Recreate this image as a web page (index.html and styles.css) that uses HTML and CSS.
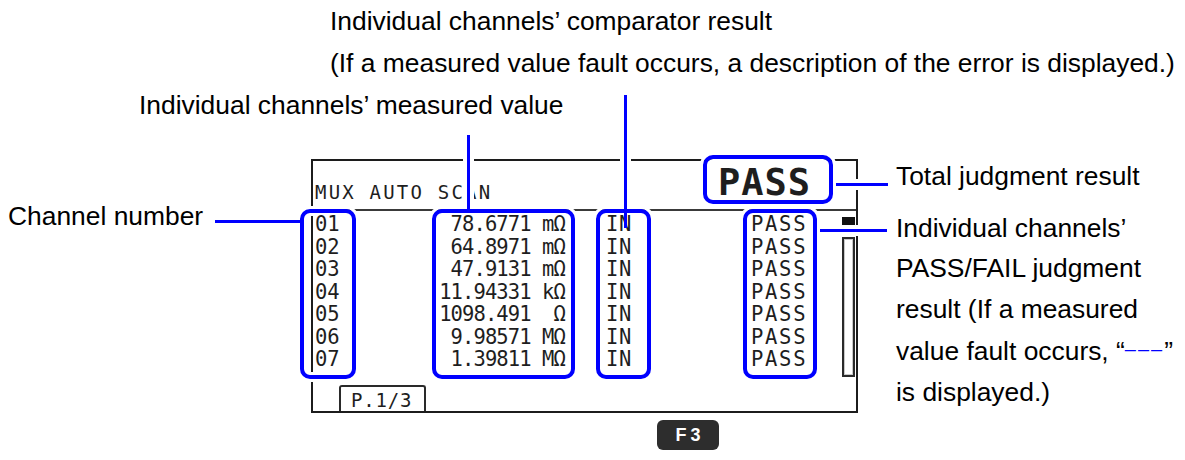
FILE: index.html
```html
<!DOCTYPE html>
<html lang="en">
<head>
    <meta charset="UTF-8">
    <title>Multiplexer Auto Scan Display</title>
    <link rel="stylesheet" href="styles.css">
</head>
<body>
    <div class="figure">
        <p class="note-top">Individual channels’ comparator result<br>(If a measured value fault occurs, a description of the error is displayed.)</p>
        <p class="note-value">Individual channels’ measured value</p>

        <div class="panel-row">
            <div class="note-channel">Channel number</div>

            <!-- Instrument screen -->
            <div class="screen">
                <div class="screen-head">
                    <span class="mode">MUX AUTO SCAN</span>
                    <span class="total mark">PASS</span>
                </div>
                <div class="screen-body">
                    <div class="col col-ch mark">
                        <div>01</div><div>02</div><div>03</div><div>04</div><div>05</div><div>06</div><div>07</div>
                    </div>
                    <div class="col col-val mark">
                        <div>78.6771 mΩ</div>
                        <div>64.8971 mΩ</div>
                        <div>47.9131 mΩ</div>
                        <div>11.94331 kΩ</div>
                        <div>1098.491  Ω</div>
                        <div>9.98571 MΩ</div>
                        <div>1.39811 MΩ</div>
                    </div>
                    <div class="col col-cmp mark">
                        <div>IN</div><div>IN</div><div>IN</div><div>IN</div><div>IN</div><div>IN</div><div>IN</div>
                    </div>
                    <div class="col col-judge mark">
                        <div>PASS</div><div>PASS</div><div>PASS</div><div>PASS</div><div>PASS</div><div>PASS</div><div>PASS</div>
                    </div>
                    <div class="scroll">
                        <span class="thumb"></span>
                        <span class="track"></span>
                    </div>
                </div>
                <div class="screen-foot">
                    <span class="tab">P.1/3</span>
                </div>
            </div>

            <div class="note-right">
                <p>Total judgment result</p>
                <p>Individual channels’<br>PASS/FAIL judgment<br>result (If a measured<br>value fault occurs, “<span class="dash">–––</span>”<br>is displayed.)</p>
            </div>
        </div>

        <div class="keys">
            <span class="key">F3</span>
        </div>

        <!-- Leader lines -->
        <span class="lead lead-h lead-channel"></span>
        <span class="lead lead-v lead-value"></span>
        <span class="lead lead-v lead-cmp"></span>
        <span class="lead-tip"></span>
        <span class="lead lead-h lead-total"></span>
        <span class="lead lead-h lead-judge"></span>
    </div>
</body>
</html>
```

FILE: styles.css
```css
body {
    margin: 0;
    background-color: #ffffff;
    font-family: 'Liberation Sans', Arial, sans-serif;
    color: #000000;
}
.figure {
    position: relative;
    width: 1185px;
    height: 460px;
    overflow: hidden;
    font-size: 26.4px;
}
.note-top, .note-value {
    margin: 0;
    line-height: 42px;
    white-space: nowrap;
}
.note-top {
    padding-left: 330px;
}
.note-value {
    padding-left: 139px;
}
.panel-row {
    display: flex;
    align-items: flex-start;
    margin-top: 33px;
}
.note-channel {
    width: 311px;
    box-sizing: border-box;
    padding: 37px 0 0 8px;
    line-height: 40.5px;
    white-space: nowrap;
}
.note-right {
    margin: -3px 0 0 38px;
    line-height: 40.5px;
    white-space: nowrap;
}
.note-right p {
    margin: 0;
}
.note-right p + p {
    margin-top: 11px;
}
.dash {
    color: #0000ff;
    font-size: 20px;
    letter-spacing: 2px;
    vertical-align: 4px;
}

/* screen */
.screen {
    width: 547px;
    height: 254px;
    box-sizing: border-box;
    border: 2px solid #1c1c1c;
    font-family: 'DejaVu Sans Mono', monospace;
    color: #1e1e1e;
}
.screen-head {
    display: flex;
    align-items: flex-start;
    height: 50px;
    box-sizing: border-box;
    border-bottom: 2px solid #3a3a3a;
}
.mode {
    align-self: flex-end;
    padding: 0 0 7px 2px;
    font-size: 19px;
    line-height: 19px;
    letter-spacing: 2.2px;
    white-space: nowrap;
}
.mark {
    box-sizing: border-box;
    border: 4px solid #0000ff;
    border-radius: 10px;
    box-shadow: 0 0 0 3px #ffffff, inset 0 0 0 3px #ffffff;
}
.total {
    margin: -6px 23px 0 auto;
    width: 130px;
    height: 49px;
    padding: 5px 0 0 11px;
    font-size: 37px;
    line-height: 37px;
    font-weight: bold;
    letter-spacing: 1px;
}
.screen-body {
    display: flex;
    align-items: flex-start;
    height: 170px;
    margin-top: -2px;
}
.col {
    height: 170px;
    font-size: 20.5px;
    line-height: 22.5px;
}
.col div {
    white-space: pre;
}
.col-ch {
    width: 56px;
    margin-left: -13px;
    padding-left: 11px;
}
.col-val {
    width: 143px;
    margin-left: 76px;
    padding-right: 6px;
    text-align: right;
    letter-spacing: -0.9px;
}
.col-cmp {
    width: 55px;
    margin-left: 21px;
    padding-left: 6px;
    letter-spacing: 0.7px;
}
.col-judge {
    width: 74px;
    margin-left: 92px;
    padding-left: 4px;
    letter-spacing: 1.7px;
}
.scroll {
    width: 13px;
    margin-left: 25px;
    padding-top: 8px;
}
.thumb {
    display: block;
    height: 8px;
    background-color: #111111;
}
.track {
    display: block;
    height: 140px;
    margin-top: 12px;
    box-sizing: border-box;
    border: 2px solid #2a2a2a;
    box-shadow: inset 0 0 0 1px #c8c8c8;
}
.screen-foot {
    display: flex;
    height: 32px;
    padding-left: 26px;
    box-sizing: border-box;
}
.tab {
    width: 87px;
    height: 26px;
    margin-top: 6px;
    box-sizing: border-box;
    border: 2px solid #2a2a2a;
    border-bottom: none;
    border-radius: 3px 3px 0 0;
    padding: 1px 0 0 10px;
    font-size: 19px;
    line-height: 24px;
    letter-spacing: 0.8px;
}

/* function key */
.keys {
    margin-top: 7px;
    padding-left: 657px;
}
.key {
    display: flex;
    align-items: center;
    justify-content: center;
    width: 62px;
    height: 30px;
    box-sizing: border-box;
    padding-left: 4px;
    border-radius: 6px;
    background-color: #2d2d2d;
    color: #ffffff;
    font-size: 18px;
    font-weight: bold;
    letter-spacing: 4px;
}

/* leader lines */
.lead {
    position: absolute;
    background-color: #0000ff;
    background-clip: padding-box;
    border: 0 solid #ffffff;
}
.lead-h {
    height: 3px;
    border-width: 4px 0;
}
.lead-v {
    width: 3px;
    border-width: 0 4px;
}
.lead-channel {
    left: 215px;
    top: 216px;
    width: 85px;
}
.lead-value {
    left: 463px;
    top: 135px;
    height: 74px;
}
.lead-cmp {
    left: 620px;
    top: 95px;
    height: 114px;
}
.lead-tip {
    position: absolute;
    left: 624px;
    top: 209px;
    width: 3px;
    height: 19px;
    background-color: #0000ff;
}
.lead-total {
    left: 836px;
    top: 179px;
    width: 52px;
}
.lead-judge {
    left: 820px;
    top: 225px;
    width: 67px;
}
```
